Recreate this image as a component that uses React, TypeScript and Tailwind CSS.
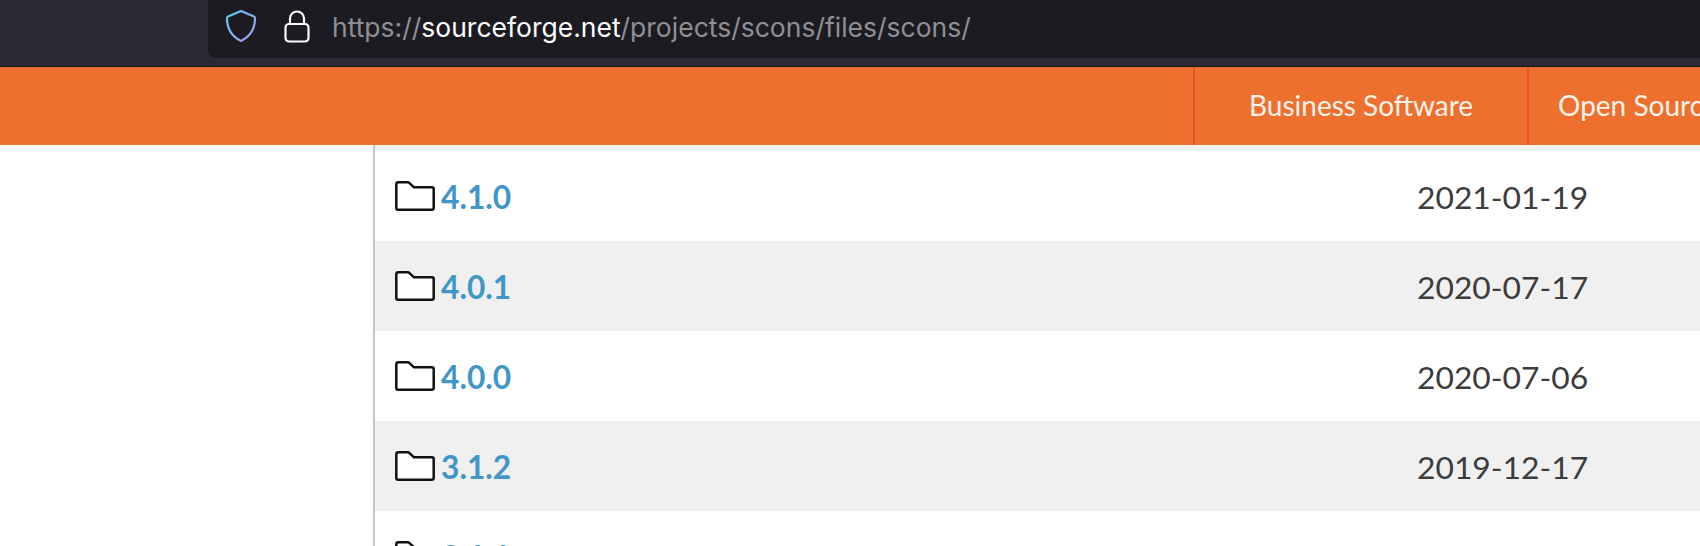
const rows = [
  { name: "4.1.0", date: "2021-01-19" },
  { name: "4.0.1", date: "2020-07-17" },
  { name: "4.0.0", date: "2020-07-06" },
  { name: "3.1.2", date: "2019-12-17" },
  { name: "3.1.1", date: "2019-08-08" },
];

function Folder({ fill }: { fill: string }) {
  return (
    <svg width="40" height="30" viewBox="0 0 40 30" className="shrink-0">
      <path
        d="M1.3 3.5 Q1.3 1.3 3.5 1.3 L12.5 1.3 Q13.8 1.3 14.8 2.3 L19 6.3 L36.8 6.3 Q38.7 6.3 38.7 8 L38.7 27 Q38.7 28.7 36.8 28.7 L3 28.7 Q1.3 28.7 1.3 27 Z"
        fill={fill}
        stroke="#111"
        strokeWidth="2.5"
        strokeLinejoin="round"
      />
    </svg>
  );
}

export default function App() {
  return (
    <div className="w-[1700px] h-[546px] overflow-hidden bg-white flex flex-col font-['Lato','Liberation_Sans',sans-serif]">
      <div className="h-[67px] shrink-0 bg-[#2b2a33] border-b border-[#17161a] pl-[208px]">
        <div className="h-[58px] bg-[#1c1b22] rounded-bl-lg flex items-center pl-[17px] pb-[6px]">
          <svg width="32" height="34" viewBox="0 0 32 34" fill="none" className="shrink-0">
            <defs>
              <linearGradient id="sh" x1="0" y1="0" x2="1" y2="1">
                <stop offset="0" stopColor="#5fc4f0" />
                <stop offset="0.5" stopColor="#80b4f2" />
                <stop offset="1" stopColor="#a99cf0" />
              </linearGradient>
            </defs>
            <path
              d="M16 2 L29 7.5 Q30 8 30 9.5 C30 20 25 27.5 16 32 C7 27.5 2 20 2 9.5 Q2 8 3 7.5 Z"
              stroke="url(#sh)"
              strokeWidth="2.2"
              strokeLinejoin="round"
            />
          </svg>
          <svg width="26" height="33" viewBox="0 0 26 33" fill="none" className="ml-[27px] shrink-0">
            <rect x="1.5" y="14" width="23" height="17.5" rx="3.5" stroke="#fbfbfe" strokeWidth="2.2" />
            <path d="M6 14 V8.5 a7 7 0 0 1 14 0 V14" stroke="#fbfbfe" strokeWidth="2.2" />
          </svg>
          <div className="ml-[22px] mt-[3px] text-[26.5px] leading-none font-['Inter',sans-serif] text-[#8f8f94] whitespace-nowrap">
            https://<span className="text-white">sourceforge.net</span>/projects/scons/files/scons/
          </div>
        </div>
      </div>
      <div className="h-[78px] shrink-0 bg-[#ee702f] flex pl-[1193px] text-[#fdf3ea] text-[28px]">
        <div className="border-l-2 border-[#e8502a] w-[334px] shrink-0 pl-[54px] pb-[2px] flex items-center whitespace-nowrap">
          Business Software
        </div>
        <div className="border-l-2 border-[#e8502a] pl-[29px] pb-[2px] flex items-center whitespace-nowrap">
          Open Source Software
        </div>
      </div>
      <div className="flex-1 flex min-h-0">
        <div className="w-[373px] shrink-0" />
        <div className="flex-1 border-l-2 border-[#c6c6c6] flex flex-col min-h-0">
          <div className="h-[6px] shrink-0 bg-[#f0f0f0]" />
          {rows.map((r, i) => (
            <div
              key={r.name}
              className={`h-[90px] shrink-0 flex items-center ${i % 2 === 1 ? "bg-[#f0f0f0]" : "bg-white"}`}
            >
              <div className="w-[1042px] pl-[20px] flex items-center gap-[6px]">
                <Folder fill="#ffffff" />
                <a className="text-[31.7px] pt-[3px] font-bold text-[#4096c7] leading-none">{r.name}</a>
              </div>
              <div className="text-[31.8px] pt-[3px] text-[#3c3c3c] leading-none">{r.date}</div>
            </div>
          ))}
        </div>
      </div>
    </div>
  );
}
